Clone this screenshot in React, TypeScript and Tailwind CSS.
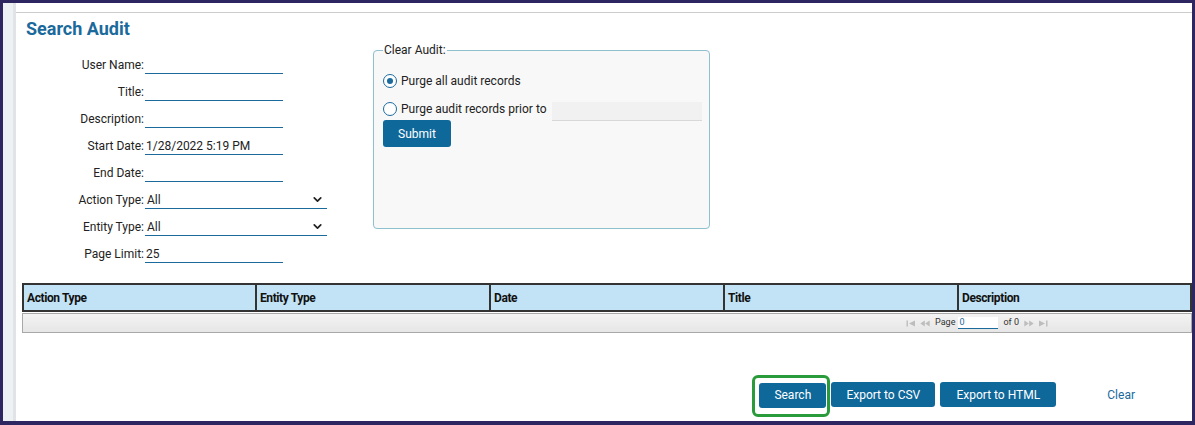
import { ChevronDown } from "lucide-react";

// Search Audit admin page — filter form, clear-audit box, results grid, action buttons.

const font = { fontFamily: "Roboto, 'Liberation Sans', Arial, sans-serif" };

function TextRow({ label, value = "" }: { label: string; value?: string }) {
  return (
    <div className="flex h-[27px] items-center">
      <span className="w-[128px] text-right text-[12px] text-[#222]">{label}</span>
      <span className="ml-[1px] flex h-[19px] w-[138px] items-end border-b border-[#1b6a9c] pb-[1px] pl-[1px] text-[12px] leading-[14px] text-[#222]">
        {value}
      </span>
    </div>
  );
}

function SelectRow({ label }: { label: string }) {
  return (
    <div className="flex h-[27px] items-center">
      <span className="w-[128px] text-right text-[12px] text-[#222]">{label}</span>
      <span className="ml-[1px] flex h-[19px] w-[182px] items-end justify-between border-b border-[#1b6a9c] pb-[1px] pl-[2px] pr-[3px] text-[12px] leading-[14px] text-[#222]">
        <span>All</span>
        <ChevronDown size={13} strokeWidth={3.2} className="mb-[1px] text-[#222]" />
      </span>
    </div>
  );
}

function Radio({ checked }: { checked?: boolean }) {
  return (
    <span className="flex h-[14px] w-[14px] shrink-0 items-center justify-center rounded-full border-[1.5px] border-[#1b6a9c] bg-white">
      {checked && <span className="h-[6px] w-[6px] rounded-full bg-[#1b6a9c]" />}
    </span>
  );
}

function Btn({ children, w }: { children: React.ReactNode; w: string }) {
  return (
    <button className={`${w} h-[25px] rounded-[3px] bg-[#0f689a] text-[12px] text-white`}>
      {children}
    </button>
  );
}

// pager glyphs: first / prev / next / last
function PagerIcon({ kind }: { kind: "first" | "prev" | "next" | "last" }) {
  const flip = kind === "next" || kind === "last";
  return (
    <svg width="10" height="7" viewBox="0 0 10 7" className={flip ? "-scale-x-100" : ""} fill="#bdbdbd">
      {kind === "first" || kind === "last" ? (
        <>
          <rect x="0.5" y="0.5" width="1.4" height="6" />
          <path d="M9 0.5 L3 3.5 L9 6.5 Z" />
        </>
      ) : (
        <>
          <path d="M4.8 0.5 L0.3 3.5 L4.8 6.5 Z" />
          <path d="M9.7 0.5 L5.2 3.5 L9.7 6.5 Z" />
        </>
      )}
    </svg>
  );
}

const columns = ["Action Type", "Entity Type", "Date", "Title", "Description"];

export default function App() {
  return (
    <div
      style={font}
      className="flex h-[425px] w-[1195px] border-b-[4px] border-l-[3px] border-r-[3px] border-t-[3px] border-[#2d2660] bg-white"
    >
      <div className="w-[10px] bg-[#eef1f4]" />
      <div className="w-[3px] bg-[#e1e3e6]" />

      <main className="flex flex-1 flex-col pt-[9px]">
        <div className="border-t border-[#cccccc]" />
        <h1 className="pl-[10px] pt-[4px] text-[18px] font-bold leading-[24px] text-[#1b6a9c]">
          Search Audit
        </h1>

        <div className="mt-[2px] flex">
          <div className="w-[312px] pt-[8px]">
            <TextRow label="User Name:" />
            <TextRow label="Title:" />
            <TextRow label="Description:" />
            <TextRow label="Start Date:" value="1/28/2022 5:19 PM" />
            <TextRow label="End Date:" />
            <SelectRow label="Action Type:" />
            <SelectRow label="Entity Type:" />
            <TextRow label="Page Limit:" value="25" />
          </div>

          <fieldset className="ml-[45px] h-[186px] w-[337px] min-w-0 rounded-[4px] border border-[#8ec0cf] bg-[#f8f8f8] px-[9px]">
            <legend className="px-[1px] text-[12px] leading-[14px] text-[#222]">Clear Audit:</legend>
            <div className="mt-[14px] flex h-[20px] items-center gap-[4px] text-[12px] text-[#222]">
              <Radio checked />
              <span>Purge all audit records</span>
            </div>
            <div className="mt-[8px] flex h-[20px] items-center gap-[4px] whitespace-nowrap text-[12px] text-[#222]">
              <Radio />
              <span>Purge audit records prior to</span>
              <span className="ml-[1px] mt-[5px] h-[19px] w-[150px] shrink-0 border-b border-[#d8d8d8] bg-[#f1f1f1]" />
            </div>
            <button className="mt-[1px] h-[27px] w-[68px] rounded-[3px] bg-[#0f689a] text-[12px] text-white">
              Submit
            </button>
          </fieldset>
        </div>

        <div className="ml-[6px] mt-[16px] w-[1170px]">
          <div className="grid h-[29px] grid-cols-[231px_234px_234px_234px_1fr] border-2 border-[#333] bg-[#c2e3f5]">
            {columns.map((c, i) => (
              <div
                key={c}
                className={`flex items-center pl-[3px] text-[12px] font-bold tracking-[-0.4px] text-[#111] ${
                  i > 0 ? "border-l-2 border-[#333]" : ""
                }`}
              >
                {c}
              </div>
            ))}
          </div>
          <div className="mt-[1px] flex h-[20px] items-center justify-end border border-[#a8a8a8] bg-gradient-to-b from-[#f3f3f3] to-[#e6e6e6] pr-[143px] text-[9px] text-[#333]">
            <span className="flex items-center gap-[4px]">
              <PagerIcon kind="first" />
              <PagerIcon kind="prev" />
            </span>
            <span className="ml-[5px]">Page</span>
            <span className="ml-[3px] h-[12px] w-[40px] border-b border-[#1b6a9c] bg-white pl-[1px] leading-[11px] text-[#1b6a9c]">
              0
            </span>
            <span className="ml-[5px]">of 0</span>
            <span className="ml-[5px] flex items-center gap-[4px]">
              <PagerIcon kind="next" />
              <PagerIcon kind="last" />
            </span>
          </div>
        </div>

        <div className="mt-[49px] flex items-center justify-end gap-[5px] pr-[57px]">
          <div className="relative">
            <Btn w="w-[67px]">Search</Btn>
            <span className="pointer-events-none absolute -bottom-[9px] -left-[7px] -right-[4px] -top-[7px] rounded-[6px] border-[3px] border-[#2a9b3a]" />
          </div>
          <Btn w="w-[104px]">Export to CSV</Btn>
          <Btn w="w-[116px]">Export to HTML</Btn>
          <a className="ml-[46px] text-[12px] text-[#1b6a9c]">Clear</a>
        </div>
      </main>
    </div>
  );
}
